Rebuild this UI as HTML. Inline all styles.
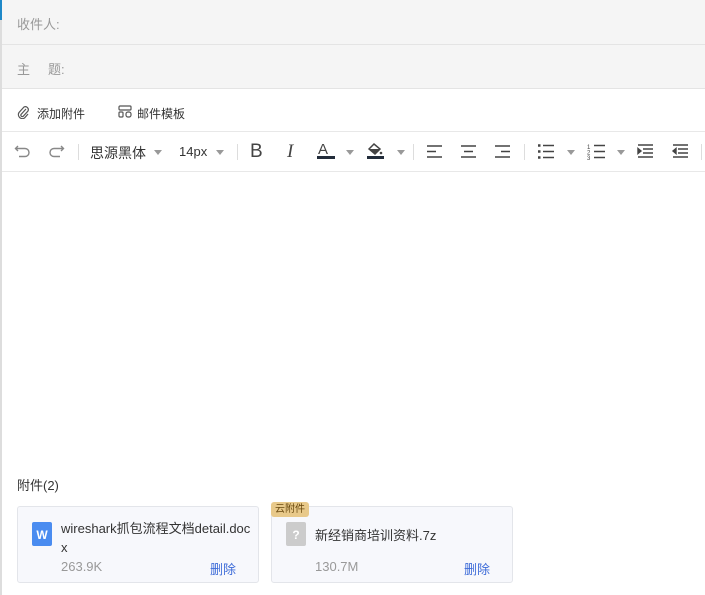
<!DOCTYPE html>
<html><head><meta charset="utf-8"><style>
*{margin:0;padding:0;box-sizing:border-box}
body{width:705px;height:595px;overflow:hidden;background:#fff;font-family:"Liberation Sans","Noto Sans CJK SC",sans-serif;position:relative}
.lb{position:absolute;left:0;top:0;width:2px;height:595px;background:#ddd}
.lb2{position:absolute;left:0;top:0;width:2px;height:20px;background:#1e88c8}
.row{position:absolute;left:2px;right:0;background:#f5f5f5;border-bottom:1px solid #e4e4e4;color:#999;font-size:13px}
.tb{position:absolute;left:2px;right:0;border-bottom:1px solid #e8e8e8}
.t{position:absolute;font-size:12px;color:#333}
.ic{position:absolute}
.card{position:absolute;top:506px;width:242px;height:77px;background:#f7f8fc;border:1px solid #e3e5ea;border-radius:3px}
.card .n{position:absolute;left:43px;top:12px;font-size:13px;color:#333;line-height:19px;width:192px;word-break:break-all}
.card .s{position:absolute;left:43px;top:52px;font-size:13px;color:#999}
.card .d{position:absolute;left:192px;top:52px;font-size:13px;color:#3d6bd8}
.sep{position:absolute;top:144px;width:1px;height:16px;background:#ddd}
.car{position:absolute;width:0;height:0;border-left:4px solid transparent;border-right:4px solid transparent;border-top:5px solid #999}
</style></head><body>
<div class="lb"></div><div class="lb2"></div>
<div class="row" style="top:0;height:45px"><span style="position:absolute;left:15px;top:14px">收件人:</span></div>
<div class="row" style="top:45px;height:44px"><span style="position:absolute;left:15px;top:14px">主</span><span style="position:absolute;left:46px;top:14px">题:</span></div>
<div class="tb" style="top:89px;height:43px"></div>
<svg class="ic" style="left:17px;top:105px" width="13" height="14" viewBox="0 0 13 14"><path d="M9 4 L4 9.5 a1.5 1.5 0 0 0 2 2 L11 6 a3 3 0 0 0 -4 -4 L2 7.5 a4 4 0 0 0 5.5 5.5 L11 9" fill="none" stroke="#555" stroke-width="1.2"/></svg>
<span class="t" style="left:37px;top:105px">添加附件</span>
<svg class="ic" style="left:118px;top:105px" width="14" height="13" viewBox="0 0 14 13"><rect x="1" y="1" width="12" height="4" rx="1" fill="none" stroke="#555" stroke-width="1.2"/><rect x="1" y="7" width="4" height="5" rx="1" fill="none" stroke="#555" stroke-width="1.2"/><rect x="8" y="7" width="5" height="5" rx="2" fill="none" stroke="#555" stroke-width="1.2"/></svg>
<span class="t" style="left:137px;top:105px">邮件模板</span>
<div class="tb" style="top:132px;height:40px"></div>
<svg class="ic" style="left:14px;top:144px" width="18" height="14" viewBox="0 0 18 14"><path d="M4 2 L1.5 4.5 L4 7 M1.5 4.5 H11 a4 4 0 0 1 0 8 H5" fill="none" stroke="#888" stroke-width="1.4"/></svg>
<svg class="ic" style="left:47px;top:144px" width="18" height="14" viewBox="0 0 18 14"><path d="M14 2 L16.5 4.5 L14 7 M16.5 4.5 H7 a4 4 0 0 0 0 8 H13" fill="none" stroke="#888" stroke-width="1.4"/></svg>
<div class="sep" style="left:78px"></div>
<span class="t" style="left:90px;top:143px;font-size:14px">思源黑体</span><div class="car" style="left:154px;top:150px"></div>
<span class="t" style="left:179px;top:144px;font-size:13px">14px</span><div class="car" style="left:216px;top:150px"></div>
<div class="sep" style="left:237px"></div>
<span class="t" style="left:250px;top:141px;font-size:19px;color:#444">B</span>
<span class="t" style="left:287px;top:141px;font-size:19px;color:#444;font-family:'Liberation Serif',serif;font-style:italic">I</span>
<span class="t" style="left:318px;top:141px;font-size:15px;color:#444">A</span><div style="position:absolute;left:317px;top:156px;width:18px;height:3px;background:#222c3a"></div>
<div class="car" style="left:346px;top:150px"></div>
<svg class="ic" style="left:366px;top:141px" width="20" height="19" viewBox="0 0 20 19"><path d="M3 8 L8 3 L14 8 L9 13 Z" fill="none" stroke="#444" stroke-width="1.5"/><path d="M3 8 L14 8 L9 13Z" fill="#444"/><circle cx="15" cy="12" r="1.3" fill="#444"/><rect x="1" y="15" width="17" height="3" fill="#222c3a"/></svg>
<div class="car" style="left:397px;top:150px"></div>
<div class="sep" style="left:413px"></div>
<svg class="ic" style="left:426px;top:144px" width="190" height="16" viewBox="0 0 190 16" stroke="#444" stroke-width="1.4" fill="none">
<path d="M1 2H16M1 7.5H10M1 13H16"/>
<path d="M35 2H50M38 7.5H47M35 13H50"/>
<path d="M69 2H84M75 7.5H84M69 13H84"/>
</svg>
<div class="sep" style="left:524px"></div>
<svg class="ic" style="left:537px;top:143px" width="160" height="18" viewBox="0 0 160 18" stroke="#444" stroke-width="1.4" fill="none">
<path d="M6 2.5H17M6 8.5H17M6 14.5H17"/><path d="M1 2.5H3.5M1 8.5H3.5M1 14.5H3.5" stroke-width="2.4"/>
<path d="M57 2.5H68M57 8.5H68M57 14.5H68"/>
<text x="50" y="6" font-size="6" fill="#444" stroke="none">1</text><text x="50" y="11.5" font-size="6" fill="#444" stroke="none">2</text><text x="50" y="17" font-size="6" fill="#444" stroke="none">3</text>
<path d="M101 2H116M106 6H116M106 10H116M101 14H116"/><path d="M101 5.5L104 8L101 10.5Z" fill="#444"/>
<path d="M136 2H151M141 6H151M141 10H151M136 14H151"/><path d="M139 5.5L136 8L139 10.5Z" fill="#444"/>
</svg>
<div class="car" style="left:567px;top:150px"></div>
<div class="car" style="left:617px;top:150px"></div>
<div class="sep" style="left:701px"></div>
<span class="t" style="left:17px;top:475px;font-size:13px">附件(2)</span>
<div class="card" style="left:17px">
<div style="position:absolute;left:14px;top:15px;width:20px;height:24px;background:#4a8cf0;border-radius:2px;color:#fff;font-size:12px;font-weight:bold;text-align:center;line-height:26px">W</div>
<div class="n">wireshark抓包流程文档detail.docx</div>
<div class="s">263.9K</div><div class="d">删除</div></div>
<div class="card" style="left:271px">
<div style="position:absolute;left:14px;top:15px;width:20px;height:24px;background:#ccc;border-radius:2px;color:#fff;font-size:12px;font-weight:bold;text-align:center;line-height:26px">?</div>
<div class="n" style="top:19px">新经销商培训资料.7z</div>
<div class="s">130.7M</div><div class="d">删除</div></div>
<div style="position:absolute;left:271px;top:502px;width:38px;height:15px;background:#e8c98a;border-radius:3px;font-size:10px;color:#6a4a10;text-align:center;line-height:15px">云附件</div>
</body></html>
